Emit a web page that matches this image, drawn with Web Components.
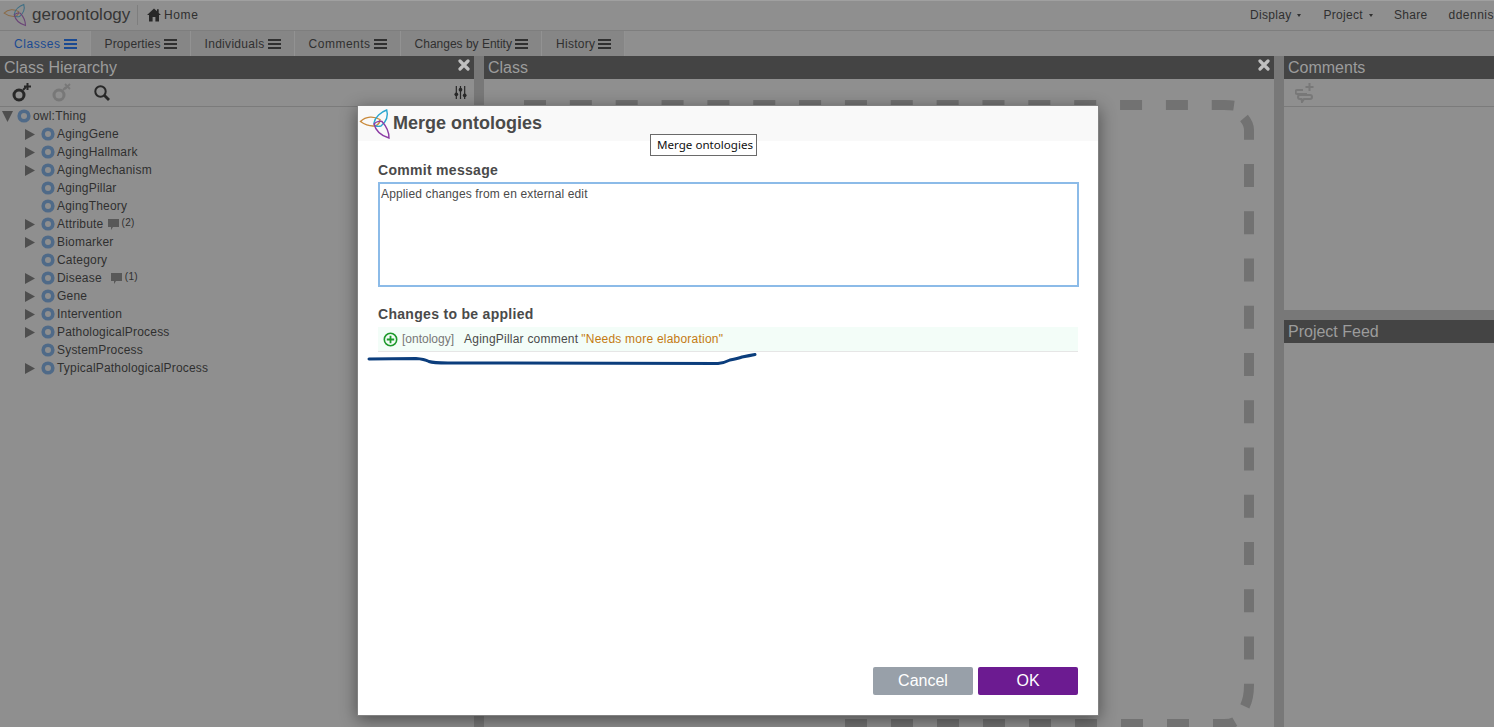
<!DOCTYPE html>
<html>
<head>
<meta charset="utf-8">
<title>Merge ontologies</title>
<style>
    html, body { margin: 0; height: 100%; overflow: hidden; }
    body { font-family: "Liberation Sans", Arial, sans-serif; background: #8f8f8f; }
</style>
</head>
<body>
<main-page>
    <app-header slot="header"></app-header>
    <app-tabs slot="tabs">
        <app-tab active style="letter-spacing:.55px">Classes</app-tab>
        <app-tab style="letter-spacing:.13px">Properties</app-tab>
        <app-tab style="letter-spacing:.3px">Individuals</app-tab>
        <app-tab style="letter-spacing:.5px">Comments</app-tab>
        <app-tab style="letter-spacing:0">Changes by Entity</app-tab>
        <app-tab style="letter-spacing:.3px">History</app-tab>
    </app-tabs>

    <work-panel slot="left" heading="Class Hierarchy" closable>
        <hierarchy-tools slot="tools"></hierarchy-tools>
        <tree-row root open label="owl:Thing"></tree-row>
        <tree-row open label="AgingGene"></tree-row>
        <tree-row open label="AgingHallmark"></tree-row>
        <tree-row open label="AgingMechanism"></tree-row>
        <tree-row label="AgingPillar"></tree-row>
        <tree-row label="AgingTheory"></tree-row>
        <tree-row open label="Attribute" comments="2" style="--note-gap:4px"></tree-row>
        <tree-row open label="Biomarker"></tree-row>
        <tree-row label="Category"></tree-row>
        <tree-row open label="Disease" comments="1" style="--note-gap:9px"></tree-row>
        <tree-row open label="Gene"></tree-row>
        <tree-row open label="Intervention"></tree-row>
        <tree-row open label="PathologicalProcess"></tree-row>
        <tree-row label="SystemProcess"></tree-row>
        <tree-row open label="TypicalPathologicalProcess"></tree-row>
    </work-panel>

    <work-panel slot="center" heading="Class" closable>
        <dashed-frame></dashed-frame>
    </work-panel>

    <work-panel slot="top-right" heading="Comments">
        <comment-tools slot="tools"></comment-tools>
    </work-panel>
    <work-panel slot="bottom-right" heading="Project Feed"></work-panel>

    <merge-dialog slot="dialog">
        <change-row></change-row>
    </merge-dialog>
</main-page>

<script>
class MainPage extends HTMLElement {
    constructor() {
        super();
        this.attachShadow({ mode: 'open' }).innerHTML = `
            <style>
                :host { display: flex; flex-direction: column; height: 727px; position: relative; overflow: hidden; }
                .work { display: flex; flex: 1; min-height: 0; background: #787878; gap: 10px; }
                .left { display: flex; width: 474px; }
                .center { display: flex; flex: 1; }
                .right { display: flex; flex-direction: column; width: 210px; gap: 10px; }
                .top { display: flex; height: 254px; }
                .bottom { display: flex; flex: 1; }
            </style>
            <slot name="header"></slot>
            <slot name="tabs"></slot>
            <div class="work">
                <div class="left"><slot name="left"></slot></div>
                <div class="center"><slot name="center"></slot></div>
                <div class="right">
                    <div class="top"><slot name="top-right"></slot></div>
                    <div class="bottom"><slot name="bottom-right"></slot></div>
                </div>
            </div>
            <slot name="dialog"></slot>
        `;
    }
}

class LogoMark extends HTMLElement {
    constructor() {
        super();
        const size = this.getAttribute('size') || 32;
        const dim = this.hasAttribute('dim');
        this.attachShadow({ mode: 'open' }).innerHTML = `
            <style>:host { display: block; line-height: 0; }</style>
            <svg width="${size}" height="${size}" viewBox="0 0 32 32" fill="none" stroke-width="1.4">
                <path d="M1.5 13.5C7 8 15 8 21 11.5C21 16 17 18.5 14 18C9 18 5 16 1.5 13.5Z" stroke="${dim ? '#8a6b48' : '#c98a3c'}"/>
                <path d="M27.7 2C22 4 16 9 15 15C15 18 18 19 22 18C28 13 29.5 8 27.7 2Z" stroke="${dim ? '#3f6f85' : '#2aa5cf'}"/>
                <path d="M30 30C23 28 17 24 15 16C18 13 22 13 23 13.5C28 19 30 24 30 30Z" stroke="${dim ? '#6a4577' : '#8d3ca5'}"/>
            </svg>
        `;
    }
}

class AppHeader extends HTMLElement {
    constructor() {
        super();
        this.attachShadow({ mode: 'open' }).innerHTML = `
            <style>
                :host { display: flex; align-items: center; height: 30px; background: #8f8f8f; border-bottom: 1px solid #7e7e7e; box-shadow: inset 0 1px #a0a0a0; color: #303030; font-size: 12px; white-space: nowrap; overflow: hidden; }
                logo-mark { margin: 0 5px 0 3px; }
                .name { font-size: 17px; width: 105px; color: #363636; }
                .divider { width: 1px; height: 20px; background: #7e7e7e; margin-right: 9px; }
                .home { display: flex; align-items: center; gap: 3px; letter-spacing: .6px; }
                nav { display: flex; margin-left: auto; letter-spacing: .3px; }
                nav span { display: flex; align-items: center; }
                nav i { display: block; width: 0; height: 0; margin: 0 0 0 6px; border: 2.5px solid transparent; border-top: 3px solid #303030; border-bottom: 0; }
                .display { margin-right: 22px; }
                .project { margin-right: 21px; }
                .share { margin-right: 21px; }
                .user { letter-spacing: .5px; }
            </style>
            <logo-mark size="24" dim></logo-mark>
            <span class="name">geroontology</span>
            <span class="divider"></span>
            <span class="home">
                <svg width="14" height="14" viewBox="0 0 14 14" fill="#282828"><path d="M7 .5L0 7h2v6.5h3.6V9h2.8v4.5H12V7h2L11.7 4.9V1.2H10v2.1Z"/></svg>
                Home
            </span>
            <nav>
                <span class="display">Display<i></i></span>
                <span class="project">Project<i></i></span>
                <span class="share">Share</span>
                <span class="user">ddennis</span>
            </nav>
        `;
    }
}

class AppTabs extends HTMLElement {
    constructor() {
        super();
        this.attachShadow({ mode: 'open' }).innerHTML = `
            <style>
                :host { display: flex; height: 25px; background: #8f8f8f; }
            </style>
            <slot></slot>
        `;
    }
}

class AppTab extends HTMLElement {
    constructor() {
        super();
        this.attachShadow({ mode: 'open' }).innerHTML = `
            <style>
                :host { display: flex; align-items: center; gap: 3px; padding: 0 13px 0 14px; background: #868686; border-right: 1px solid #929292; color: #303030; font-size: 12px; white-space: nowrap; }
                :host([active]) { background: #8f8f8f; color: #1a4a92; }
                .bars { display: flex; flex-direction: column; gap: 2px; width: 13px; }
                .bars b { display: block; height: 2px; background: currentColor; }
            </style>
            <slot></slot>
            <span class="bars"><b></b><b></b><b></b></span>
        `;
    }
}

class WorkPanel extends HTMLElement {
    constructor() {
        super();
        const close = this.hasAttribute('closable') ? `
            <svg class="close" width="12" height="12" viewBox="0 0 12 12" fill="none" stroke="#c0c0c0" stroke-width="3.2" stroke-linecap="round"><path d="M2 2L10 10M10 2L2 10"/></svg>` : '';
        this.attachShadow({ mode: 'open' }).innerHTML = `
            <style>
                :host { display: flex; flex-direction: column; flex: 1; min-width: 0; background: #8f8f8f; }
                header { display: flex; justify-content: space-between; height: 23px; padding: 0 4px; background: #444; color: #9c9c9c; font-size: 16px; line-height: 24px; white-space: nowrap; }
                .close { margin: 3px 0 0; }
                .body { flex: 1; position: relative; overflow: hidden; }
            </style>
            <header><span>${this.getAttribute('heading')}</span>${close}</header>
            <slot name="tools"></slot>
            <div class="body"><slot></slot></div>
        `;
    }
}

class HierarchyTools extends HTMLElement {
    constructor() {
        super();
        this.attachShadow({ mode: 'open' }).innerHTML = `
            <style>
                :host { display: flex; align-items: center; height: 27px; border-bottom: 1px solid #7b7b7b; padding-left: 12px; }
                svg { display: block; }
                .del { margin-left: 20px; }
                .find { margin-left: 22px; }
                .tune { margin-left: auto; margin-right: 7px; }
            </style>
            <svg width="20" height="19" viewBox="0 0 20 19" fill="none" stroke="#282828">
                <circle cx="7" cy="12" r="5" stroke-width="3"/>
                <path d="M11 7L14 4" stroke-width="2"/>
                <path d="M15.5 0V7M12 3.5H19" stroke-width="2"/>
            </svg>
            <svg class="del" width="20" height="19" viewBox="0 0 20 19" fill="none" stroke="#787878">
                <circle cx="7" cy="12" r="5" stroke-width="3"/>
                <path d="M11 7L14 4" stroke-width="2"/>
                <path d="M13 1L18 6M18 1L13 6" stroke-width="1.8"/>
            </svg>
            <svg class="find" width="16" height="16" viewBox="0 0 16 16" fill="none" stroke="#282828" stroke-width="2">
                <circle cx="6.5" cy="6.5" r="5.2"/>
                <path d="M10.5 10.5L15 15" stroke-width="2.8"/>
            </svg>
            <svg class="tune" width="13" height="13" viewBox="0 0 14 14" fill="#282828" stroke="#282828">
                <path d="M2.5 0V14M7 0V14M11.5 0V14" stroke-width="1.3"/>
                <circle cx="2.5" cy="9" r="2" stroke="none"/>
                <circle cx="7" cy="4" r="2" stroke="none"/>
                <circle cx="11.5" cy="10" r="2" stroke="none"/>
            </svg>
        `;
    }
}

class CommentTools extends HTMLElement {
    constructor() {
        super();
        this.attachShadow({ mode: 'open' }).innerHTML = `
            <style>
                :host { display: flex; align-items: center; height: 27px; border-bottom: 1px solid #7b7b7b; padding-left: 11px; }
            </style>
            <svg width="20" height="20" viewBox="0 0 20 20" fill="none" stroke="#787878" stroke-width="2">
                <path d="M14.5 0V8M10.5 4H18.5"/>
                <path d="M8 7H2.5a2 2 0 0 0 0 4H12"/>
                <path d="M5 12H15a2 2 0 0 1 0 4H9L7 19L6.5 16H5a2 2 0 0 1 0-4Z"/>
            </svg>
        `;
    }
}

class TreeRow extends HTMLElement {
    constructor() {
        super();
        const root = this.hasAttribute('root');
        const comments = this.getAttribute('comments');
        const twist = !this.hasAttribute('open') ? ''
            : root ? '<path d="M0 0H11L5.5 11Z"/>' : '<path d="M0 0L10 5.5L0 11Z"/>';
        this.attachShadow({ mode: 'open' }).innerHTML = `
            <style>
                :host { display: flex; align-items: center; height: 18px; padding-left: 25px; color: #2f2f2f; font-size: 12px; letter-spacing: .2px; white-space: nowrap; }
                :host([root]) { padding-left: 2px; }
                .twist { width: 11px; height: 11px; margin-right: 5px; flex: none; }
                :host([root]) .twist { margin-right: 4px; }
                .ball { width: 14px; height: 14px; margin-right: 2px; flex: none; }
                .note { display: flex; align-items: center; margin-left: var(--note-gap, 6px); font-size: 10px; letter-spacing: .3px; }
                .note svg { margin-right: 3px; }
                .note span { position: relative; top: -2px; }
            </style>
            <svg class="twist" viewBox="0 0 11 11" fill="#4e4e4e">${twist}</svg>
            <svg class="ball" viewBox="0 0 14 14" fill="none" stroke="#4f6a88" stroke-width="3.6"><circle cx="7" cy="7" r="4.8"/></svg>
            <span>${this.getAttribute('label')}</span>
            ${comments ? `<span class="note">
                <svg width="11" height="11" viewBox="0 0 11 11" fill="#585858"><path d="M0 0H11V8H5L3 11V8H0Z"/></svg>
                <span>(${comments})</span>
            </span>` : ''}
        `;
    }
}

class DashedFrame extends HTMLElement {
    constructor() {
        super();
        // dash runs differ per side in the reference, so each side is its own path
        this.attachShadow({ mode: 'open' }).innerHTML = `
            <style>
                :host { display: block; position: absolute; inset: 0; }
                svg { display: block; }
            </style>
            <svg width="790" height="648" fill="none" stroke="#727272" stroke-width="10">
                <path d="M40 26H740Q753 26 758 29" stroke-dasharray="22 23.85"/>
                <path d="M760 39Q765 45 765 51V606Q765 620 760 629" stroke-dasharray="23 24.25"/>
                <path d="M361 645H740Q748 645 752 642" stroke-dasharray="22 24"/>
            </svg>
        `;
    }
}

class ChangeRow extends HTMLElement {
    constructor() {
        super();
        this.attachShadow({ mode: 'open' }).innerHTML = `
            <style>
                :host { display: flex; align-items: center; height: 24px; padding-left: 5px; background: #f3fdf8; border-bottom: 1px solid #e6e6e6; color: #4a4a4a; font-size: 12px; letter-spacing: .22px; white-space: nowrap; }
                svg { margin-right: 4px; flex: none; }
                .tag { color: #777; margin-right: 10px; letter-spacing: 0; }
                .value { color: #c47a12; margin-left: 3px; }
            </style>
            <svg width="15" height="15" viewBox="0 0 15 15" fill="none" stroke="#1d9a2c">
                <circle cx="7.5" cy="7.5" r="6.2" stroke-width="1.6"/>
                <path d="M7.5 3.8V11.2M3.8 7.5H11.2" stroke-width="1.8"/>
            </svg>
            <span class="tag">[ontology]</span>
            <span>AgingPillar comment</span>
            <span class="value">"Needs more elaboration"</span>
        `;
    }
}

class MergeDialog extends HTMLElement {
    constructor() {
        super();
        this.attachShadow({ mode: 'open' }).innerHTML = `
            <style>
                :host { display: flex; flex-direction: column; position: absolute; left: 357px; top: 105px; width: 740px; height: 609px; background: #fff; border: 1px solid #828282; box-shadow: 0 4px 16px rgba(0,0,0,.45); color: #4a4a4a; }
                header { display: flex; align-items: center; height: 35px; background: #f9f9f9; padding-left: 1px; }
                h1 { margin: 0 0 0 2px; font-size: 18px; font-weight: bold; color: #4a4a4a; }
                .content { display: flex; flex-direction: column; flex: 1; padding: 21px 20px 20px; }
                label { font-size: 14px; font-weight: bold; letter-spacing: .3px; line-height: 16px; }
                .message { box-sizing: border-box; height: 105px; margin: 4px -1px 19px 0; padding: 2px 1px; border: 2px solid #8cbbe8; font-size: 12px; letter-spacing: .14px; line-height: 16px; }
                .changes { margin-top: 5px; width: 700px; }
                footer { display: flex; justify-content: flex-end; gap: 5px; margin-top: auto; }
                button { width: 100px; height: 28px; padding: 0; border: 0; border-radius: 2px; color: #fff; font: 16px "Liberation Sans", Arial, sans-serif; }
                .cancel { background: #98a0a9; }
                .ok { background: #6c1b91; }
                .tip { position: absolute; left: 292px; top: 28px; width: 93px; padding: 0 6px; text-align: center; background: #fff; border: 1px solid #6a6a6a; color: #111; font: 11.6px/20px "Noto Sans", sans-serif; white-space: nowrap; }
                .scribble { position: absolute; left: 0; top: 0; pointer-events: none; }
            </style>
            <header>
                <logo-mark size="32"></logo-mark>
                <h1>Merge ontologies</h1>
            </header>
            <div class="content">
                <label>Commit message</label>
                <div class="message">Applied changes from en external edit</div>
                <label>Changes to be applied</label>
                <div class="changes"><slot></slot></div>
                <footer>
                    <button class="cancel">Cancel</button>
                    <button class="ok">OK</button>
                </footer>
            </div>
            <div class="tip">Merge ontologies</div>
            <svg class="scribble" width="740" height="300" fill="none" stroke="#0b3d7c" stroke-width="3" stroke-linecap="round">
                <path d="M11 253L58 252.5Q66 253 71 255.5Q75 257 90 257L360 257.5Q366 257 372 254Q380 252.5 384 251Q392 249.5 397 248.5"/>
            </svg>
        `;
    }
}

customElements.define('main-page', MainPage);
customElements.define('logo-mark', LogoMark);
customElements.define('app-header', AppHeader);
customElements.define('app-tabs', AppTabs);
customElements.define('app-tab', AppTab);
customElements.define('work-panel', WorkPanel);
customElements.define('hierarchy-tools', HierarchyTools);
customElements.define('comment-tools', CommentTools);
customElements.define('tree-row', TreeRow);
customElements.define('dashed-frame', DashedFrame);
customElements.define('change-row', ChangeRow);
customElements.define('merge-dialog', MergeDialog);
</script>
</body>
</html>
